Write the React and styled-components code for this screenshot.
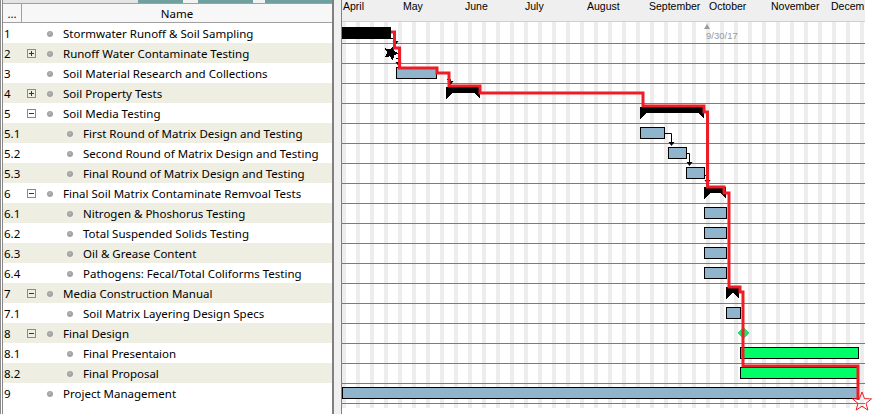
import styled, { createGlobalStyle } from 'styled-components';

const GlobalStyle = createGlobalStyle`
  html, body { margin: 0; padding: 0; background: #fff; }
  body { width: 874px; height: 414px; overflow: hidden; }
`;

const tasks = [
  { id: '1', name: 'Stormwater Runoff & Soil Sampling', level: 0 },
  { id: '2', name: 'Runoff Water Contaminate Testing', level: 0, toggle: '+' },
  { id: '3', name: 'Soil Material Research and Collections', level: 0 },
  { id: '4', name: 'Soil Property Tests', level: 0, toggle: '+' },
  { id: '5', name: 'Soil Media Testing', level: 0, toggle: '-' },
  { id: '5.1', name: 'First Round of Matrix Design and Testing', level: 1 },
  { id: '5.2', name: 'Second Round of Matrix Design and Testing', level: 1 },
  { id: '5.3', name: 'Final Round of Matrix Design and Testing', level: 1 },
  { id: '6', name: 'Final Soil Matrix Contaminate Remvoal Tests', level: 0, toggle: '-' },
  { id: '6.1', name: 'Nitrogen & Phoshorus Testing', level: 1 },
  { id: '6.2', name: 'Total Suspended Solids Testing', level: 1 },
  { id: '6.3', name: 'Oil & Grease Content', level: 1 },
  { id: '6.4', name: 'Pathogens: Fecal/Total Coliforms Testing', level: 1 },
  { id: '7', name: 'Media Construction Manual', level: 0, toggle: '-' },
  { id: '7.1', name: 'Soil Matrix Layering Design Specs', level: 1 },
  { id: '8', name: 'Final Design', level: 0, toggle: '-' },
  { id: '8.1', name: 'Final Presentaion', level: 1 },
  { id: '8.2', name: 'Final Proposal', level: 1 },
  { id: '9', name: 'Project Management', level: 0 },
];

const months = [
  ['April', 60], ['May', 62], ['June', 60], ['July', 62], ['August', 62],
  ['September', 60], ['October', 62], ['November', 60], ['Decem', 35],
];

// bars in page coordinates (x from 342 = April 1st, 2px per day)
const bars = [
  { row: 0, kind: 'solid', x1: 342, x2: 391 },
  { row: 1, kind: 'star', x1: 391 },
  { row: 2, kind: 'task', x1: 396, x2: 437 },
  { row: 3, kind: 'summary', x1: 446, x2: 480 },
  { row: 4, kind: 'summary', x1: 640, x2: 704 },
  { row: 5, kind: 'task', x1: 640, x2: 665 },
  { row: 6, kind: 'task', x1: 668, x2: 687 },
  { row: 7, kind: 'task', x1: 686, x2: 705 },
  { row: 8, kind: 'summary', x1: 704, x2: 726 },
  { row: 9, kind: 'task', x1: 704, x2: 727 },
  { row: 10, kind: 'task', x1: 704, x2: 727 },
  { row: 11, kind: 'task', x1: 704, x2: 727 },
  { row: 12, kind: 'task', x1: 704, x2: 727 },
  { row: 13, kind: 'summary', x1: 726, x2: 739 },
  { row: 14, kind: 'task', x1: 726, x2: 741 },
  { row: 15, kind: 'diamond', x1: 743 },
  { row: 16, kind: 'green', x1: 740, x2: 859 },
  { row: 17, kind: 'green', x1: 740, x2: 858 },
  { row: 18, kind: 'task', x1: 342, x2: 858 },
];

const criticalPath = [
  [391, 32], [394.5, 32], [394.5, 48], [399.5, 48], [399.5, 68], [437, 68],
  [437, 73], [449, 73], [449, 86], [480, 86], [480, 93], [643, 93], [643, 106],
  [704, 106], [704, 112], [707.5, 112], [707.5, 187], [724, 187], [724, 193],
  [729, 193], [729, 287], [740, 287], [740, 292], [743, 292], [743, 366],
  [858, 366], [858, 400],
];

const links = [
  { from: [665, 133], to: [671, 146] },
  { from: [687, 153], to: [689, 166] },
  { from: [705, 175], to: [707, 184] },
  { from: [391, 38], to: [395, 45] },
  { from: [396, 58], to: [398, 66] },
  { from: [447, 79], to: [450, 85] },
];

const ROW_TOP = 23;
const ROW_H = 20;
const rowTop = (r) => ROW_TOP + r * ROW_H;

const starPoints = (cx, cy, ro, ri, rot = -90) => {
  const pts = [];
  for (let i = 0; i < 10; i++) {
    const r = i % 2 === 0 ? ro : ri;
    const a = ((rot + i * 36) * Math.PI) / 180;
    pts.push(`${(cx + r * Math.cos(a)).toFixed(1)},${(cy + r * Math.sin(a)).toFixed(1)}`);
  }
  return pts.join(' ');
};

const Window = styled.div`
  display: flex;
  width: 874px;
  height: 414px;
  background: #fff;
  font-family: "Noto Sans", "Open Sans", sans-serif;
`;

const TablePanel = styled.div`
  width: 329px;
  flex-shrink: 0;
  display: flex;
  flex-direction: column;
  border-left: 3px double #8a8a8a;
  border-right: 2px solid #808080;
`;

const TopStrip = styled.div`
  height: 3px;
  background: linear-gradient(90deg, #e4e4e4 0 135px, #6f9f9f 135px 180px, #f2f2f2 180px 195px,
    #6f9f9f 195px 250px, #f2f2f2 250px 262px, #6f9f9f 262px 329px);
`;

const HeaderRow = styled.div`
  display: grid;
  grid-template-columns: 19px 1fr;
  height: 20px;
  box-sizing: border-box;
  border-top: 1px solid #a0a0a0;
  border-bottom: 1px solid #a0a0a0;
  background: #f7f7f7;
  font-size: 11.5px;
  color: #000;
`;

const HeaderCell = styled.div`
  display: flex;
  align-items: center;
  justify-content: center;
  border-right: ${(p) => (p.$last ? 'none' : '1px solid #a0a0a0')};
  line-height: 18px;
  padding-top: 1px;
`;

const Row = styled.div`
  display: grid;
  grid-template-columns: 19px 1fr;
  height: ${ROW_H}px;
  box-sizing: border-box;
  padding-top: 1px;
  background: ${(p) => (p.$alt ? '#eeeee2' : '#fff')};
  font-size: 11.5px;
  color: #000;
  line-height: 19px;
  white-space: nowrap;
`;

const NumCell = styled.div`
  padding-left: 1px;
`;

const NameCell = styled.div`
  display: flex;
  align-items: center;
  padding-left: 5px;
`;

const Toggle = styled.span`
  position: relative;
  width: 9px;
  height: 9px;
  box-sizing: border-box;
  flex-shrink: 0;
  border: 1px solid ${(p) => (p.$sign ? '#8a8a8a' : 'transparent')};
  &::before {
    content: '';
    display: ${(p) => (p.$sign ? 'block' : 'none')};
    position: absolute;
    left: 1px;
    top: 3px;
    width: 5px;
    height: 1px;
    background: #333;
  }
  &::after {
    content: '';
    display: ${(p) => (p.$sign === '+' ? 'block' : 'none')};
    position: absolute;
    left: 3px;
    top: 1px;
    width: 1px;
    height: 5px;
    background: #333;
  }
`;

const Bullet = styled.span`
  width: 6px;
  height: 6px;
  border-radius: 50%;
  flex-shrink: 0;
  margin-left: ${(p) => 11 + p.$level * 20}px;
  margin-right: 10px;
  background: radial-gradient(circle at 45% 40%, #b8b8b8 0, #9c9c9c 60%, #c8c8c8 100%);
`;

const Splitter = styled.div`
  width: 7px;
  flex-shrink: 0;
  background: #f0f0f0;
  border-right: 1px solid #808080;
`;

const GanttPanel = styled.div`
  width: 523px;
  flex-shrink: 0;
  display: flex;
  flex-direction: column;
`;

const TimeScale = styled.div`
  display: flex;
  height: 22px;
  box-sizing: border-box;
  background: #efefef;
  border-bottom: 1px solid #cfcfcf;
  overflow: hidden;
`;

const Month = styled.div`
  width: ${(p) => p.$w}px;
  flex-shrink: 0;
  padding-left: 1px;
  box-sizing: border-box;
  font-family: "Liberation Sans", Arial, sans-serif;
  font-size: 10.5px;
  line-height: 12px;
  color: #000;
  white-space: nowrap;
`;

const Chart = styled.svg`
  display: block;
  overflow: visible;
`;

const SummaryBar = ({ x1, x2, top }) => {
  const y = top + 4;
  const yb = y + 6;
  const t = Math.min(6, (x2 - x1) / 2);
  return (
    <g fill="#000">
      <rect x={x1} y={y} width={x2 - x1} height={6} />
      <polygon points={`${x1},${yb} ${x1 + t},${yb} ${x1},${yb + 6}`} />
      <polygon points={`${x2 - t},${yb} ${x2},${yb} ${x2},${yb + 6}`} />
    </g>
  );
};

const BarShape = ({ bar }) => {
  const top = rowTop(bar.row);
  if (bar.kind === 'solid') {
    return <rect x={bar.x1} y={top + 4} width={bar.x2 - bar.x1} height={12} fill="#000" />;
  }
  if (bar.kind === 'summary') {
    return <SummaryBar x1={bar.x1} x2={bar.x2} top={top} />;
  }
  if (bar.kind === 'star') {
    return <polygon points={starPoints(bar.x1, top + 10, 8, 3.6, -70)} fill="#000" />;
  }
  if (bar.kind === 'diamond') {
    const cy = top + 10;
    const x = bar.x1;
    return (
      <polygon points={`${x},${cy - 6} ${x + 6},${cy} ${x},${cy + 6} ${x - 6},${cy}`} fill="#1de36a" />
    );
  }
  const fill = bar.kind === 'green' ? '#00ff66' : '#8fb4cc';
  return (
    <rect
      x={bar.x1 + 0.5}
      y={top + 4.5}
      width={bar.x2 - bar.x1 - 1}
      height={11}
      fill={fill}
      stroke="#000"
      strokeWidth="1"
    />
  );
};

const Link = ({ from, to }) => (
  <g>
    <polyline
      points={`${from[0]},${from[1] + 0.5} ${to[0] + 0.5},${from[1] + 0.5} ${to[0] + 0.5},${to[1] - 3}`}
      fill="none"
      stroke="#000"
      strokeWidth="1"
    />
    <polygon points={`${to[0] - 2.5},${to[1] - 4} ${to[0] + 3.5},${to[1] - 4} ${to[0] + 0.5},${to[1]}`} fill="#000" />
  </g>
);

const GanttChart = () => {
  const weekends = [];
  for (let x = 342; x < 865; x += 14) weekends.push(x);
  const lines = tasks.map((_, i) => rowTop(i + 1));
  return (
    <Chart width="523" height="392" viewBox="342 22 523 392">
      {weekends.map((x) => (
        <rect key={x} x={x} y={22} width={Math.min(4, 865 - x)} height={386} fill="#ededed" />
      ))}
      {lines.map((y) => (
        <line key={y} x1={342} x2={865} y1={y + 0.5} y2={y + 0.5} stroke="#7c7c7c" strokeWidth="1" />
      ))}
      <polygon points="707,24 710,29 704,29" fill="#9a9a9a" />
      <text x="706" y="38.5" fontFamily="Liberation Sans, Arial, sans-serif" fontSize="9.5" fill="#9a9a9a">
        9/30/17
      </text>
      {links.map((l, i) => (
        <Link key={i} from={l.from} to={l.to} />
      ))}
      <g shapeRendering="crispEdges">
        {bars.map((b) => (
          <BarShape key={b.row} bar={b} />
        ))}
      </g>
      <polyline
        points={criticalPath.map((p) => p.join(',')).join(' ')}
        fill="none"
        stroke="#ee1c24"
        strokeWidth="3"
        strokeLinejoin="miter"
      />
      <polygon points={starPoints(862, 402, 10, 4.2)} fill="none" stroke="#ee1c24" strokeWidth="1" />
    </Chart>
  );
};

const App = () => (
  <>
    <GlobalStyle />
    <Window>
      <TablePanel>
        <TopStrip />
        <HeaderRow>
          <HeaderCell>...</HeaderCell>
          <HeaderCell $last>Name</HeaderCell>
        </HeaderRow>
        {tasks.map((t, i) => (
          <Row key={t.id} $alt={i % 2 === 1}>
            <NumCell>{t.id}</NumCell>
            <NameCell>
              <Toggle $sign={t.toggle} />
              <Bullet $level={t.level} />
              <span>{t.name}</span>
            </NameCell>
          </Row>
        ))}
      </TablePanel>
      <Splitter />
      <GanttPanel>
        <TimeScale>
          {months.map(([m, w]) => (
            <Month key={m} $w={w}>{m}</Month>
          ))}
        </TimeScale>
        <GanttChart />
      </GanttPanel>
    </Window>
  </>
);

export default App;
